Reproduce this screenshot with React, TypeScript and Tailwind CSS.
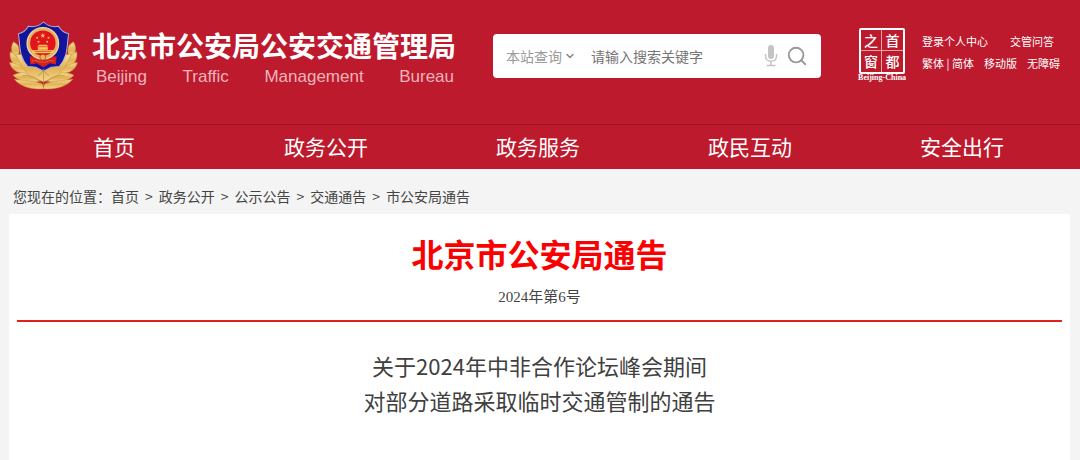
import { ChevronDown, Search } from 'lucide-react'

const navItems = ['首页', '政务公开', '政务服务', '政民互动', '安全出行']

const breadcrumbs = ['首页', '政务公开', '公示公告', '交通通告', '市公安局通告']

const PoliceEmblem = () => (
  <svg viewBox="0 0 206 206" className="w-[69px] h-[69px] flex-shrink-0" role="img" aria-label="警徽">
    <defs>
      <linearGradient id="leaf" x1="0" y1="0" x2="0" y2="1">
        <stop offset="0" stopColor="#f3dc9c" />
        <stop offset="0.5" stopColor="#e2b355" />
        <stop offset="1" stopColor="#f3d68c" />
      </linearGradient>
    </defs>
    {/* Wreath */}
    <g fill="url(#leaf)" stroke="#c9973c" strokeWidth="1.5">
      <path d="M14 62 C4 76 6 96 18 112 C30 108 34 88 26 72 Z" />
      <path d="M4 92 C0 112 10 132 34 142 C42 126 26 104 4 92 Z" />
      <path d="M2 124 C6 146 30 160 58 156 C52 138 28 128 2 124 Z" />
      <path d="M12 162 C36 148 70 152 92 180 C64 188 32 182 12 162 Z" />
      <path d="M16 174 C40 178 72 178 100 188 L104 202 C68 206 34 196 16 174 Z" />
      <path d="M192 62 C202 76 200 96 188 112 C176 108 172 88 180 72 Z" />
      <path d="M202 92 C206 112 196 132 172 142 C164 126 180 104 202 92 Z" />
      <path d="M204 124 C200 146 176 160 148 156 C154 138 178 128 204 124 Z" />
      <path d="M194 162 C170 148 136 152 114 180 C142 188 174 182 194 162 Z" />
      <path d="M190 174 C166 178 134 178 106 188 L102 202 C138 206 172 196 190 174 Z" />
      <path d="M20 100 L186 100 L168 136 L146 164 L103 182 L60 164 L38 136 Z" />
    </g>
    {/* Shield */}
    <path
      d="M103 3 C90 15 76 20 58 16 C50 30 40 36 28 38 C34 72 28 104 56 136 L80 138 L103 150 L126 138 L150 136 C178 104 172 72 178 38 C166 36 156 30 148 16 C130 20 116 15 103 3 Z"
      fill="#10159c"
      stroke="#b9b0cf"
      strokeWidth="3"
    />
    <path d="M62 106 L142 106 L140 130 L122 126 L103 138 L82 126 L64 130 Z" fill="#d91d20" />
    {/* National emblem */}
    <circle cx="101" cy="67" r="47" fill="#e2b264" stroke="#f1d49a" strokeWidth="4" />
    <circle cx="101" cy="66" r="38" fill="#e3141c" />
    <g fill="#f4c85c">
      <path d="M101 35 l2 6 h6 l-5 4 l2 6 l-5 -4 l-5 4 l2 -6 l-5 -4 h6 Z" />
      <circle cx="84" cy="50" r="3" />
      <circle cx="118" cy="50" r="3" />
      <circle cx="88" cy="62" r="3" />
      <circle cx="114" cy="62" r="3" />
      <path d="M84 76 L90 71 L112 71 L118 76 Z" />
      <path d="M86 78 H116 V86 H86 Z" />
      <path d="M69 87 H133 V96 H69 Z" />
    </g>
    <path d="M76 91 H126" stroke="#d33a20" strokeWidth="2" />
    <circle cx="101" cy="108" r="9" fill="#e8b650" stroke="#c22a1d" strokeWidth="2" />
    <path d="M68 120 C84 112 92 128 101 122 C110 128 118 112 134 120" fill="none" stroke="#c9652c" strokeWidth="3" />
    <path
      d="M103 143 C98 155 94 160 87 162 M103 143 C108 155 112 160 119 162 M103 150 V200 M40 164 C62 160 84 168 96 186 M166 164 C144 160 122 168 110 186"
      fill="none"
      stroke="#b98a38"
      strokeWidth="2"
    />
  </svg>
)

const CapitalSeal = () => (
  <a href="#capital" className="flex flex-col items-center text-white">
    <span className="grid grid-cols-2 grid-rows-2 w-[46px] h-[46px] border-2 border-white rounded-xs text-[14px] leading-5 text-center font-medium">
      <span className="border-r border-b border-white/60">之</span>
      <span className="border-b border-white/60">首</span>
      <span className="border-r border-white/60">窗</span>
      <span>都</span>
    </span>
    <span className="font-['Liberation_Serif',serif] font-bold text-[8px] leading-2">Beijing-China</span>
  </a>
)

const MicIcon = () => (
  <svg viewBox="0 0 14 22" className="w-3.5 h-[22px]" aria-hidden="true">
    <rect x="4" y="0" width="6" height="14" rx="3" fill="#c4c4c4" />
    <path d="M1.5 9 V11 C1.5 18 12.5 18 12.5 11 V9 M7 16 V20 M2.5 20.5 H11.5" fill="none" stroke="#c4c4c4" strokeWidth="1.5" />
  </svg>
)

const SearchBox = () => (
  <form className="flex items-center w-[328px] h-11 pl-3 pr-[13px] bg-white rounded-sm text-sm" onSubmit={(e) => e.preventDefault()}>
    <div className="relative flex items-center">
      <select aria-label="查询范围" className="appearance-none w-[70px] h-6 pl-px bg-transparent text-[#999999] outline-none">
        <option>本站查询</option>
      </select>
      <ChevronDown className="absolute -right-px w-3 h-3 text-[#888888] pointer-events-none" strokeWidth={3} />
    </div>
    <input
      type="text"
      aria-label="搜索关键字"
      placeholder="请输入搜索关键字"
      className="flex-1 min-w-0 ml-4 bg-transparent text-[#555555] placeholder:text-[#757575] outline-none"
    />
    <button type="button" aria-label="语音输入">
      <MicIcon />
    </button>
    <button type="submit" aria-label="搜索" className="ml-2">
      <Search className="w-[22px] h-[22px] text-[#999999]" strokeWidth={2} />
    </button>
  </form>
)

const Header = () => (
  <header className="bg-[#bd1a2d] text-white">
    <div className="flex items-start h-[124px] pl-[9px] pr-5">
      <div className="mt-[21px]">
        <PoliceEmblem />
      </div>
      <div className="ml-3.5 mt-[25px] w-[366px]">
        <h1 className="text-[28px] leading-10 font-bold whitespace-nowrap">北京市公安局公安交通管理局</h1>
        <p className="flex justify-between px-1 font-['Liberation_Sans',sans-serif] text-[17px] leading-6 text-[#f0b4ba]">
          <span>Beijing</span> <span>Traffic</span> <span>Management</span> <span>Bureau</span>
        </p>
      </div>
      <div className="ml-[35px] mt-[34px]">
        <SearchBox />
      </div>
      <div className="flex flex-1 justify-end">
        <div className="mt-[28px]">
          <CapitalSeal />
        </div>
        <div className="ml-4 mt-[30px] text-[11px] leading-[22px] whitespace-nowrap">
          <div className="flex gap-[22px]">
            <a href="#login">登录个人中心</a>
            <a href="#faq">交管问答</a>
          </div>
          <div className="flex gap-2.5">
            <span>
              <a href="#traditional">繁体</a> | <a href="#simplified">简体</a>
            </span>
            <a href="#mobile">移动版</a>
            <a href="#accessible">无障碍</a>
          </div>
        </div>
      </div>
    </div>
    <nav className="grid grid-cols-5 h-[45px] pl-2 pr-3 border-t border-[#9c1524] text-[21px] leading-[42px] text-center">
      {navItems.map((item) => (
        <a key={item} href="#nav">
          {item}
        </a>
      ))}
    </nav>
  </header>
)

const App = () => {
  return (
    <div className="flex flex-col min-h-screen bg-[#f4f4f4] font-['Noto_Sans_CJK_SC',sans-serif]">
      <Header />
      <nav aria-label="面包屑" className="flex items-center h-[45px] px-[13px] pt-[9px] text-sm text-[#444444]">
        <span>您现在的位置：</span>
        {breadcrumbs.map((item, index) => (
          <span key={item}>
            {index > 0 && <span className="px-1.5">&gt;</span>}
            <a href="#crumb">{item}</a>
          </span>
        ))}
      </nav>
      <main className="flex-1 ml-[9px] mr-2.5 px-2 pt-[15px] bg-white text-center">
        <h2 className="text-[32px] leading-[48px] font-bold text-[#fb0000]">北京市公安局通告</h2>
        <p className="pt-2 pb-[11px] font-['Liberation_Serif','Noto_Sans_CJK_SC',serif] text-[15px] leading-6 text-[#444444]">
          2024年第6号
        </p>
        <hr className="border-t-2 border-[#e02020]" />
        <h3 className="pt-[26px] text-[22px] leading-[35px] text-[#404040]">
          关于2024年中非合作论坛峰会期间
          <br />
          对部分道路采取临时交通管制的通告
        </h3>
      </main>
    </div>
  )
}

export default App
